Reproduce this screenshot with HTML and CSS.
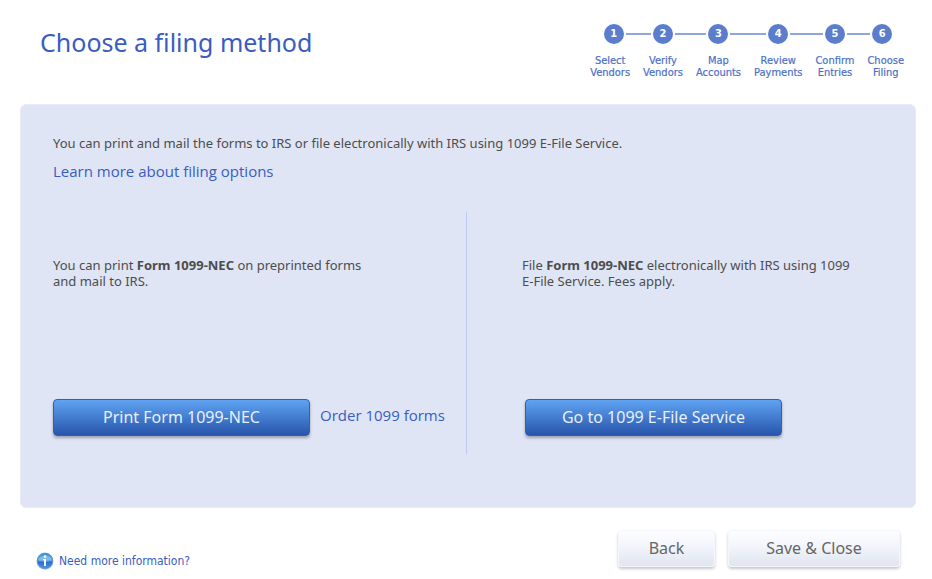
FILE: index.html
```html
<!DOCTYPE html>
<html lang="en">
<head>
    <meta charset="UTF-8">
    <meta name="viewport" content="width=device-width, initial-scale=1.0">
    <title>Choose a filing method</title>
    <link rel="stylesheet" href="styles.css">
</head>
<body>
    <header class="header">
        <h1>Choose a filing method</h1>
        <ol class="steps">
            <li><div class="marker"><span class="dot">1</span></div>Select<br>Vendors</li>
            <li><div class="marker"><span class="dot">2</span></div>Verify<br>Vendors</li>
            <li><div class="marker"><span class="dot">3</span></div>Map<br>Accounts</li>
            <li><div class="marker"><span class="dot">4</span></div>Review<br>Payments</li>
            <li><div class="marker"><span class="dot">5</span></div>Confirm<br>Entries</li>
            <li><div class="marker"><span class="dot">6</span></div>Choose<br>Filing</li>
        </ol>
    </header>

    <main class="panel">
        <p>You can print and mail the forms to IRS or file electronically with IRS using 1099 E-File Service.</p>
        <a class="link" href="#">Learn more about filing options</a>

        <div class="methods">
            <section class="method">
                <p>You can print <b>Form 1099-NEC</b> on preprinted forms<br>and mail to IRS.</p>
                <div class="actions">
                    <button type="button" class="primary">Print Form 1099-NEC</button>
                    <a class="link" href="#">Order 1099 forms</a>
                </div>
            </section>
            <section class="method">
                <p>File <b>Form 1099-NEC</b> electronically with IRS using 1099<br>E-File Service. Fees apply.</p>
                <div class="actions">
                    <button type="button" class="primary">Go to 1099 E-File Service</button>
                </div>
            </section>
        </div>
    </main>

    <footer class="footer">
        <a class="help" href="#">
            <svg width="18" height="18" viewBox="0 0 18 18" aria-hidden="true">
                <defs>
                    <linearGradient id="ball" x1="0" y1="0" x2="0" y2="1">
                        <stop offset="0" stop-color="#2f8fd0"/>
                        <stop offset="0.4" stop-color="#5aaaea"/>
                        <stop offset="0.6" stop-color="#2a6fd2"/>
                        <stop offset="1" stop-color="#4c94ea"/>
                    </linearGradient>
                </defs>
                <circle cx="9" cy="9.4" r="8.4" fill="#b9bfc9"/>
                <circle cx="9" cy="8.8" r="7.8" fill="url(#ball)" stroke="#5b93cc" stroke-width="0.8"/>
                <path d="M2.4 8.6a6.7 6.3 0 0 1 13.2 0q-6.6 2.2-13.2 0z" fill="#fff" opacity="0.25"/>
                <circle cx="9" cy="4.6" r="1.3" fill="#fff"/>
                <path d="M7 7h3v7H8V8.2H7z" fill="#fff"/>
            </svg>
            Need more information?
        </a>
        <div class="nav">
            <button type="button" class="back">Back</button>
            <button type="button" class="save">Save &amp; Close</button>
        </div>
    </footer>
</body>
</html>
```
FILE: styles.css
```css
* {
    box-sizing: border-box;
}
body {
    margin: 0;
    background: #fff;
    color: #4d4d4d;
    font-family: Tahoma, "Noto Sans", sans-serif;
    font-size: 13px;
    line-height: 16px;
}
p {
    margin: 0;
}
a {
    color: #3a5dbf;
    text-decoration: none;
}

/* Title and progress steps */
.header {
    display: flex;
    justify-content: space-between;
    align-items: flex-start;
    padding: 24px 28px 0 40px;
    height: 104px;
}
h1 {
    margin: 0;
    color: #3a5dbf;
    font-size: 25px;
    font-weight: normal;
    line-height: 36px;
}
.steps {
    display: flex;
    gap: 13px;
    margin: 0;
    padding: 0;
    list-style: none;
    color: #4c70c8;
    font-family: Tahoma, "DejaVu Sans Condensed", sans-serif;
    font-size: 11px;
    line-height: 12px;
    text-align: center;
    -webkit-text-stroke: 0.2px #4c70c8;
}
.marker {
    display: flex;
    align-items: center;
    margin-bottom: 11px;
}
.marker::before,
.marker::after {
    content: "";
    flex: 1;
    height: 2px;
    background: #8ea6de;
}
.marker::before {
    margin-left: -7px;
}
.marker::after {
    margin-right: -7px;
}
.steps li:first-child .marker::before,
.steps li:last-child .marker::after {
    margin: 0;
    background: none;
}
.dot {
    width: 20px;
    height: 20px;
    margin: 0 2px;
    border-radius: 50%;
    background: #5c7dcc;
    color: #fff;
    font-weight: bold;
    line-height: 20px;
    -webkit-text-stroke: 0;
}

/* Main panel */
.panel {
    margin: 0 16px 0 20px;
    padding: 30px 32px 53px;
    border: 1px solid #e8ecf8;
    border-radius: 6px;
    background: #dfe5f5;
}
.link {
    font-family: "Segoe UI", "Open Sans", sans-serif;
    font-size: 15px;
    line-height: 20px;
}
.panel > .link {
    display: inline-block;
    margin-top: 10px;
}
.methods {
    display: grid;
    grid-template-columns: 413px 1fr;
    margin-top: 31px;
}
.method {
    display: flex;
    flex-direction: column;
    justify-content: space-between;
    height: 242px;
    padding: 45px 0 18px;
}
.method + .method {
    padding-left: 55px;
    border-left: 1px solid #bccbf4;
}
.actions {
    display: flex;
    align-items: flex-start;
    gap: 10px;
}
.actions .link {
    margin-top: 6px;
}
.method + .method .actions {
    padding-left: 3px;
}

/* Buttons */
button {
    padding: 0 0 2px;
    font-family: Tahoma, "Noto Sans", sans-serif;
    font-size: 16px;
    cursor: pointer;
}
.primary {
    width: 257px;
    height: 37px;
    border: 1px solid #3b5da5;
    border-radius: 4px;
    background: linear-gradient(#5fa3f2, #2855ab);
    box-shadow: 0 2px 3px rgba(0, 0, 0, 0.3);
    color: #e9f0fc;
}

/* Footer */
.footer {
    display: flex;
    justify-content: space-between;
    align-items: flex-start;
    padding: 22px 32px 10px 36px;
}
.help {
    display: flex;
    align-items: center;
    gap: 5px;
    margin-top: 22px;
    font-family: Tahoma, "DejaVu Sans Condensed", sans-serif;
    font-size: 12px;
}
.nav {
    display: flex;
    gap: 13px;
}
.nav button {
    height: 37px;
    border: 1px solid #f4f6fb;
    border-radius: 4px;
    background: linear-gradient(#fcfdff, #f3f6fc 40%, #e0e5ee);
    box-shadow: 0 2px 3px rgba(0, 0, 0, 0.22);
    color: #666;
}
.nav .back {
    width: 97px;
}
.nav .save {
    width: 172px;
}
```
